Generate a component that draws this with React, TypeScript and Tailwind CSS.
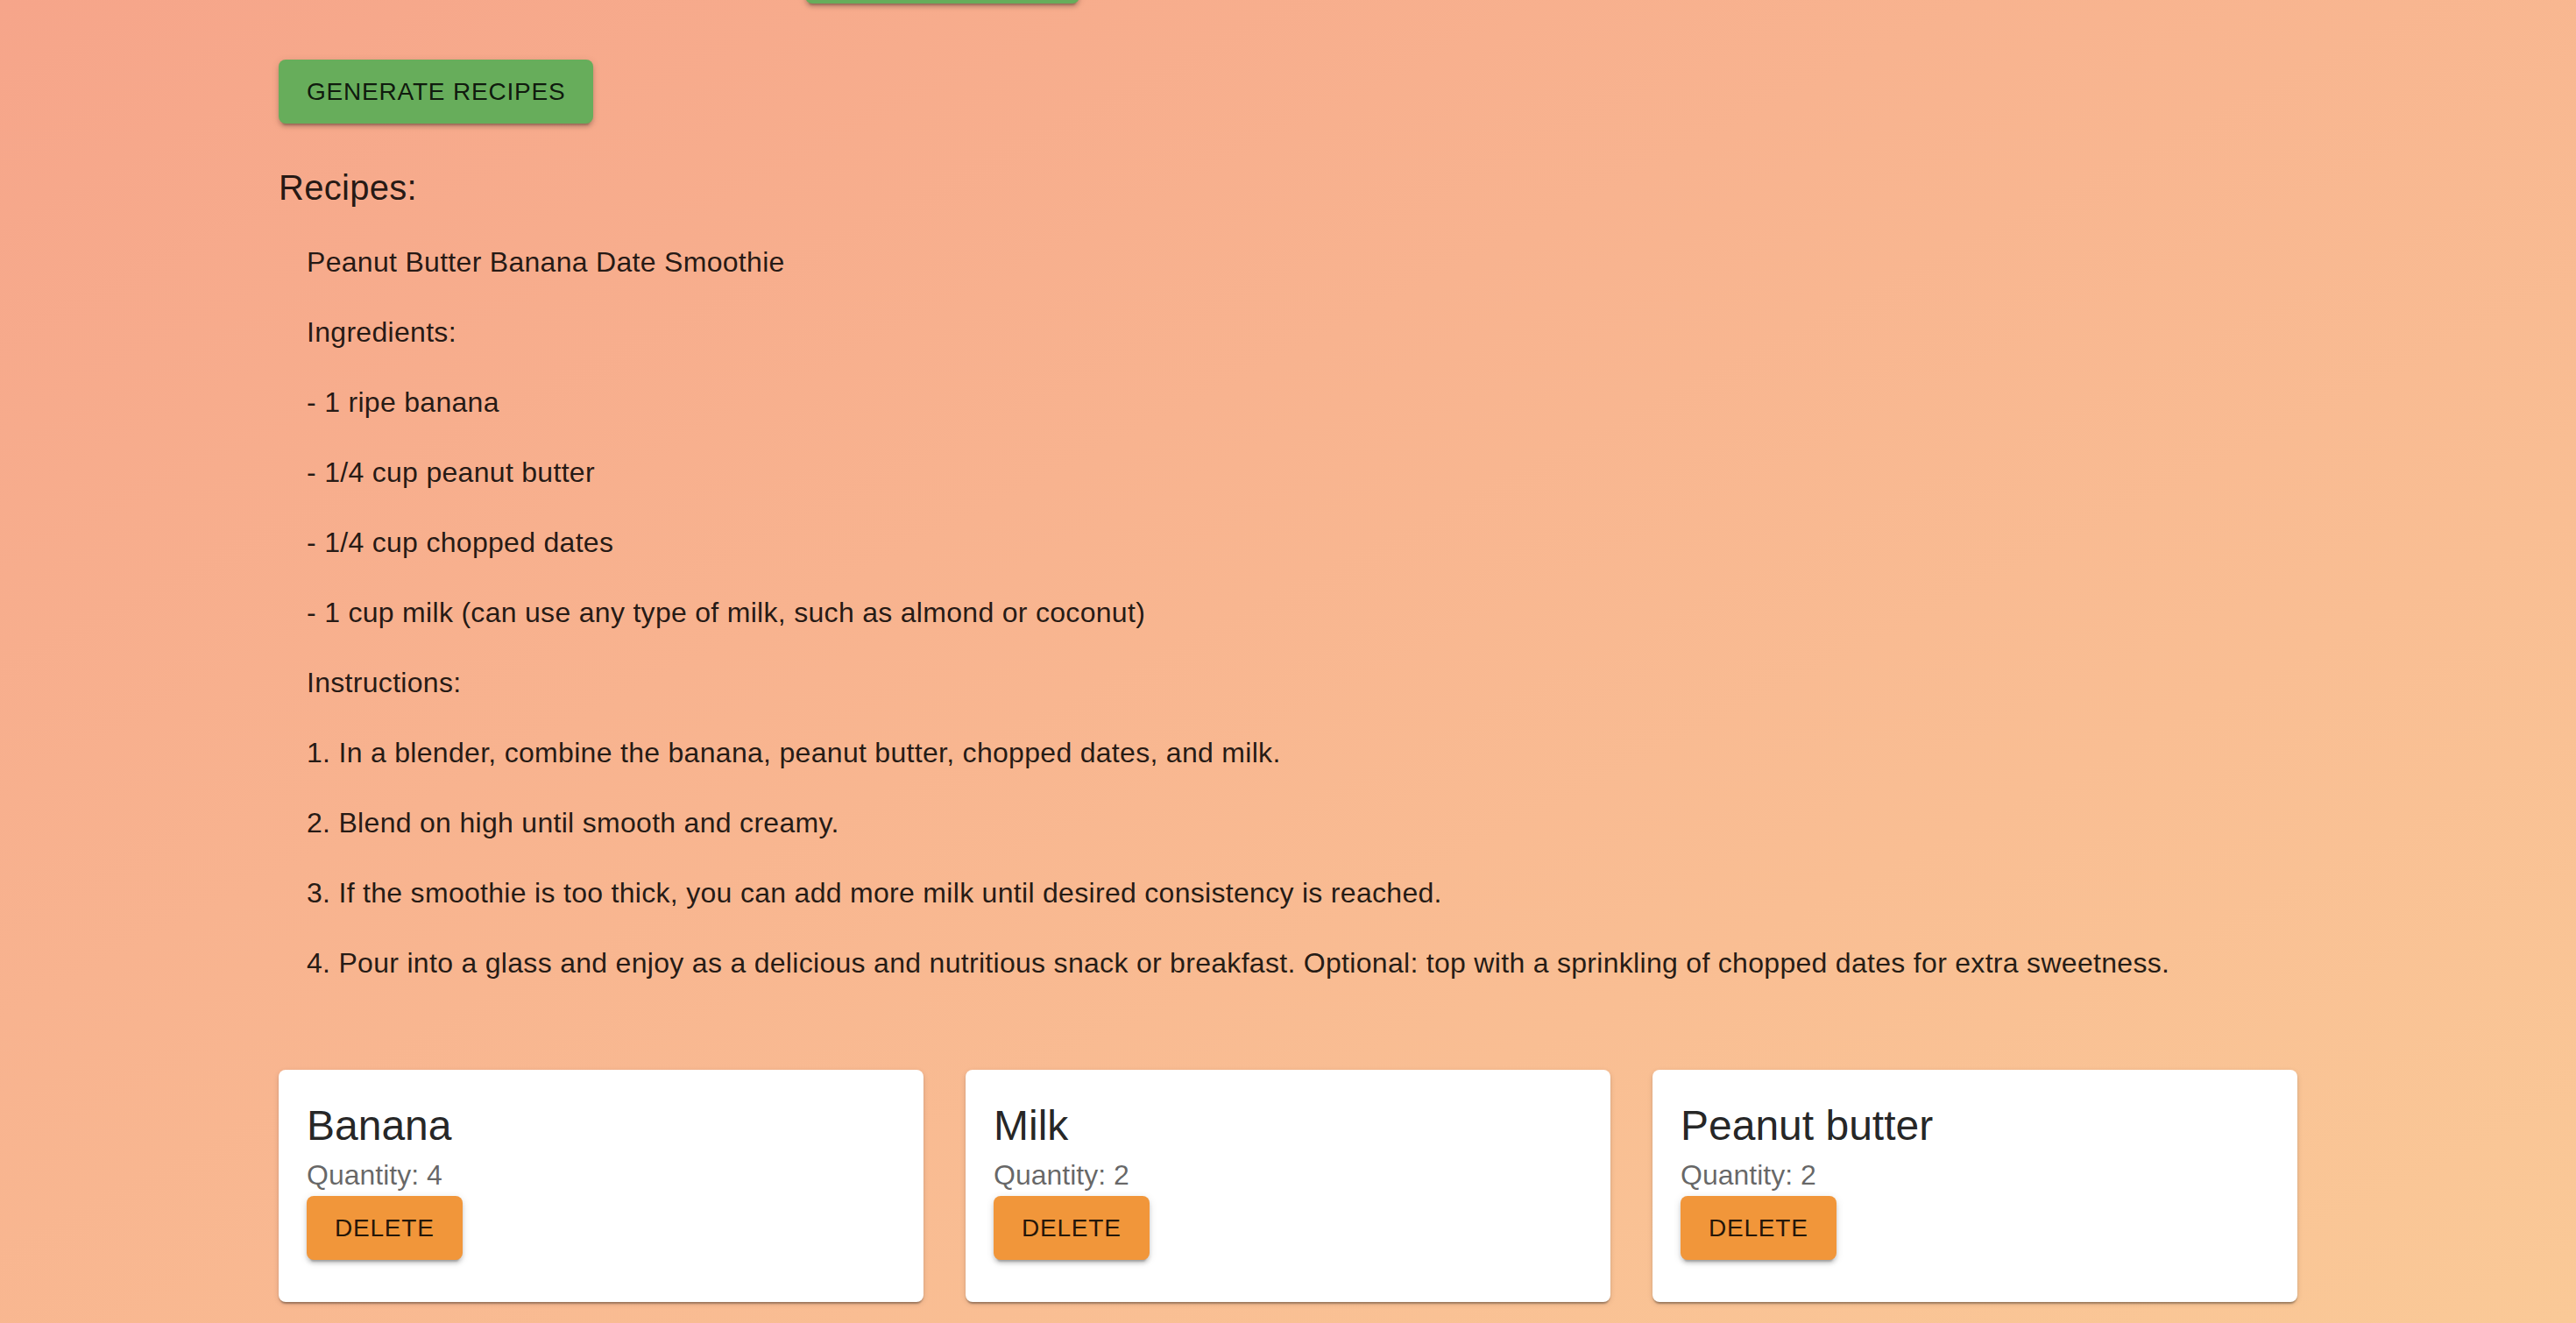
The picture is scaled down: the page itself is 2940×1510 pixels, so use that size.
import React from "react";

type Ingredient = { name: string; quantity: number };

const ingredients: Ingredient[] = [
  { name: "Banana", quantity: 4 },
  { name: "Milk", quantity: 2 },
  { name: "Peanut butter", quantity: 2 },
];

const recipeLines = [
  "Peanut Butter Banana Date Smoothie",
  "Ingredients:",
  "- 1 ripe banana",
  "- 1/4 cup peanut butter",
  "- 1/4 cup chopped dates",
  "- 1 cup milk (can use any type of milk, such as almond or coconut)",
  "Instructions:",
  "1. In a blender, combine the banana, peanut butter, chopped dates, and milk.",
  "2. Blend on high until smooth and creamy.",
  "3. If the smoothie is too thick, you can add more milk until desired consistency is reached.",
  "4. Pour into a glass and enjoy as a delicious and nutritious snack or breakfast. Optional: top with a sprinkling of chopped dates for extra sweetness.",
];

const btnShadow =
  "shadow-[0_6px_2px_-4px_rgba(0,0,0,0.2),0_4px_4px_0_rgba(0,0,0,0.14),0_2px_10px_0_rgba(0,0,0,0.12)]";

function IngredientCard({ item }: { item: Ingredient }) {
  return (
    <div className="bg-white rounded-[8px] px-[32px] pt-[32px] pb-[48px] shadow-[0_4px_2px_-2px_rgba(0,0,0,0.2),0_2px_2px_0_rgba(0,0,0,0.14),0_2px_6px_0_rgba(0,0,0,0.12)]">
      <div className="text-[48px] leading-[64px] text-[rgba(0,0,0,0.87)]">{item.name}</div>
      <div className="text-[32px] leading-[48px] text-[rgba(0,0,0,0.6)]">Quantity: {item.quantity}</div>
      <button
        className={`h-[73px] px-[32px] rounded-[8px] bg-[#f1963a] text-[28px] tracking-[0.8px] uppercase text-[rgba(0,0,0,0.87)] ${btnShadow}`}
      >
        Delete
      </button>
    </div>
  );
}

export default function App() {
  return (
    <div
      className="w-full h-[1510px] overflow-hidden bg-gradient-to-br from-[#f6a58a] to-[#fac997]"
      style={{ fontFamily: '"Liberation Sans", Arial, Helvetica, sans-serif' }}
    >
      <main className="w-[2304px] mx-auto flex flex-col">
        {/* bottom edge of the add button, scrolled off the top */}
        <div className={`-mt-[70px] ml-[601px] w-[313px] h-[74px] shrink-0 rounded-[8px] bg-[#67ad5b] ${btnShadow}`} />

        <div className="mt-[64px]">
          <button
            className={`h-[73px] px-[32px] rounded-[8px] bg-[#67ad5b] text-[28px] tracking-[0.8px] uppercase text-[rgba(0,0,0,0.87)] ${btnShadow}`}
          >
            Generate Recipes
          </button>
        </div>

        <h6 className="mt-[41px] text-[40px] leading-[64px] tracking-[0.3px] text-[rgba(0,0,0,0.87)]">Recipes:</h6>

        <section className="pt-[29px] pl-[32px] flex flex-col gap-[32px]">
          {recipeLines.map((line) => (
            <p key={line} className="text-[32px] leading-[48px] tracking-[0.3px] text-[rgba(0,0,0,0.87)]">
              {line}
            </p>
          ))}
        </section>

        <section className="mt-[98px] grid grid-cols-3 gap-[48px]">
          {ingredients.map((item) => (
            <IngredientCard key={item.name} item={item} />
          ))}
        </section>
      </main>
    </div>
  );
}
